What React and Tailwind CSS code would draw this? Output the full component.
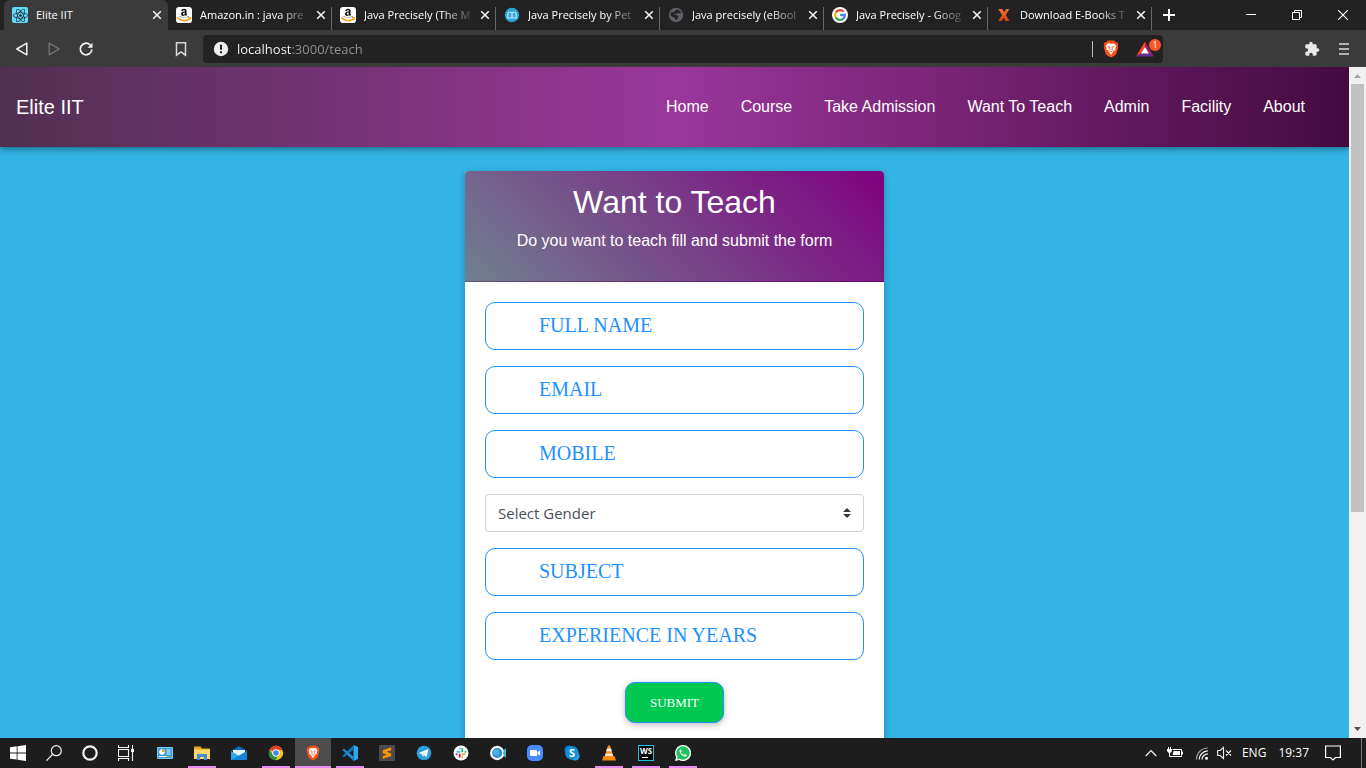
import React from "react";
import { FaAmazon, FaReact } from "react-icons/fa";

function AmazonIcon() {
  return (
    <svg viewBox="0 0 16 16" className="size-4 shrink-0" aria-hidden="true">
      <rect width="16" height="16" rx="3" fill="#fff" />
      <svg x="2.5" y="0.5" width="11" height="11" viewBox="0 0 448 400" overflow="hidden">
        <FaAmazon size={448} color="#111" />
      </svg>
      <rect x="1" y="10.4" width="14" height="5" fill="#fff" />
      <path d="M2 11.2c3.4 3 8 3 11.2.9" fill="none" stroke="#f90" strokeWidth="1.6" strokeLinecap="round" />
      <path d="M11.8 10.8l2.6-.2-.5 2.7" fill="none" stroke="#f90" strokeWidth="1.1" />
    </svg>
  );
}

function ReactIcon() {
  return (
    <span className="flex size-4 shrink-0 items-center justify-center rounded-xs bg-[#61dafb] text-[#20232a]">
      <FaReact size={15} aria-hidden="true" />
    </span>
  );
}

function BookIcon() {
  return (
    <svg viewBox="0 0 16 16" className="size-4 shrink-0" aria-hidden="true">
      <circle cx="8" cy="8" r="7.2" fill="#2ba6db" />
      <path d="M3.800 11V6.400Q3.800 5.200 5 5.200h1.800Q8 5.200 8 6.400V11zM8 11V6.400Q8 5.200 9.200 5.200H11q1.200 0 1.200 1.200V11z" fill="#3aa9dc" stroke="#c9ecfb" strokeWidth="1.1" />
    </svg>
  );
}

function GlobeIcon() {
  return (
    <svg viewBox="0 0 16 16" className="size-4 shrink-0" aria-hidden="true">
      <circle cx="8" cy="8" r="7.2" fill="#5f6368" />
      <path d="M8.500 2.600c2.200.2 4 1.500 4.800 3.300-1.300.6-2 .1-3 .3-1 .3-1.900.9-2.900.3-.8-.3-1.300 0-1.200.6.300.8 1.300.4 2.300.8 1.500.5 2.100 1.700 1.400 3-.4.800-1.200.9-1.400 1.900-.2.700-.9.600-1.200 0-.4-.9-.2-1.700-1-2.300C5 9.600 3.500 9.400 2.300 8.200c0-1.200.5-2.400 1.200-3.300 1 .5 1.900.5 2.600-.1.900-.6 1.400-1.500 2.400-2.200z" fill="#222" />
    </svg>
  );
}

function GoogleIcon() {
  return (
    <svg viewBox="0 0 16 16" className="size-4 shrink-0" aria-hidden="true">
      <circle cx="8" cy="8" r="8" fill="#fff" />
      <g fill="none" strokeWidth="2.300">
        <path d="M11.600 4.600A4.900 4.900 0 0 0 3.800 5.600" stroke="#ea4335" />
        <path d="M3.800 5.600a4.900 4.900 0 0 0 0 4.800" stroke="#fbbc05" />
        <path d="M3.800 10.400a4.900 4.900 0 0 0 7.200 1.500" stroke="#34a853" />
        <path d="M11 11.900A4.900 4.900 0 0 0 12.900 8H8.200" stroke="#4285f4" />
      </g>
    </svg>
  );
}

function XIcon() {
  return (
    <svg viewBox="0 0 16 16" className="size-4 shrink-0" aria-hidden="true">
      <defs>
        <linearGradient id="xg" x2="0" y2="1">
          <stop stopColor="#f0743c" />
          <stop offset="1" stopColor="#d63f0c" />
        </linearGradient>
      </defs>
      <path d="M2.300 2h4l1.900 3.300L10.300 2h3l-3.500 6 3.700 6H9.600L7.800 10.700 5.600 14H2.200l3.900-6z" fill="url(#xg)" />
    </svg>
  );
}

function BraveIcon({ className }) {
  return (
    <svg viewBox="0 0 16 18" className={className} aria-hidden="true">
      <path d="M4.600.6h6.800l1.500 1.700 1.200-.1 1.200 1.900-.5 1.400.5 1.600-1.900 6.600-1.500 1.700L8 17.500l-3.900-2.100-1.500-1.700L.7 7.100l.5-1.600L.7 4.100l1.200-1.900 1.200.1z" fill="#fb4f14" />
      <path d="M5 3.200l3 .5 3-.5 2.200 2.600-.9 2.400.4 1.300-2.400 2.100L8 14.900l-2.300-3.300-2.400-2.100.4-1.300-.9-2.400z" fill="#fff" />
      <path d="M4.500 6.500l2.500.5-.3 1.100 .4 1.700-1.500.7M11.500 6.500L9 7l.3 1.100-.4 1.700 1.500.7M6.700 12L8 11.200l1.300.8" fill="none" stroke="#fb4f14" strokeWidth=".8" />
    </svg>
  );
}

function CloseGlyph() {
  return (
    <svg viewBox="0 0 10 10" className="size-2.5" aria-hidden="true">
      <path d="M1.200 1.200l7.600 7.600M8.800 1.200L1.200 8.800" stroke="#f1f1f1" strokeWidth="1.600" />
    </svg>
  );
}

const tabs = [
  { title: "Elite IIT", icon: <ReactIcon />, active: true },
  { title: "Amazon.in : java pre", icon: <AmazonIcon /> },
  { title: "Java Precisely (The M", icon: <AmazonIcon /> },
  { title: "Java Precisely by Pet", icon: <BookIcon /> },
  { title: "Java precisely (eBool", icon: <GlobeIcon /> },
  { title: "Java Precisely - Goog", icon: <GoogleIcon /> },
  { title: "Download E-Books T", icon: <XIcon /> },
];

function TabStrip() {
  return (
    <div className="flex h-[30px] bg-[#222222] pl-1">
      {tabs.map((tab) => (
        <div
          key={tab.title}
          className={
            "flex h-full w-41 min-w-0 items-center pl-2 " +
            (tab.active ? "rounded-t-md bg-[#3b3b3b]" : "")
          }
        >
          {tab.icon}
          <a
            href="#tab"
            className={
              "ml-2 min-w-0 flex-1 overflow-hidden text-[11px] whitespace-nowrap text-white " +
              (tab.active ? "" : "[mask-image:linear-gradient(to_right,#000_78px,transparent_112px)]")
            }
          >
            {tab.title}
          </a>
          <button type="button" aria-label="Close tab" className="flex size-4 shrink-0 items-center justify-center">
            <CloseGlyph />
          </button>
          <span className={"ml-[2px] h-[23px] w-px shrink-0 self-end " + (tab.active ? "" : "bg-[#686868]")} />
        </div>
      ))}
      <button type="button" aria-label="New tab" className="flex w-8.5 items-center justify-center">
        <svg viewBox="0 0 12 12" className="size-3" aria-hidden="true">
          <path d="M6 0v12M0 6h12" stroke="#fff" strokeWidth="2" />
        </svg>
      </button>
      <div className="ml-auto flex">
        <button type="button" aria-label="Minimize" className="flex w-[46px] items-center justify-center">
          <svg viewBox="0 0 10 10" className="size-2.5"><path d="M0 4.500h10" stroke="#fff" /></svg>
        </button>
        <button type="button" aria-label="Restore" className="flex w-[46px] items-center justify-center">
          <svg viewBox="0 0 10 10" className="size-2.5"><path d="M.5 2.500h7v7h-7zM2.500 2.500v-2h7v7h-2" fill="none" stroke="#fff" /></svg>
        </button>
        <button type="button" aria-label="Close" className="flex w-[46px] items-center justify-center">
          <svg viewBox="0 0 10 10" className="size-2.5"><path d="M0 0l10 10M10 0L0 10" stroke="#fff" strokeWidth="1.100" /></svg>
        </button>
      </div>
    </div>
  );
}

function Toolbar() {
  const btn = "flex h-8 w-8 shrink-0 items-center justify-center";
  return (
    <div className="flex h-[37px] items-center bg-[#3b3b3b] px-1.5">
      <button type="button" aria-label="Back" className={btn}>
        <svg viewBox="0 0 14 16" className="h-4 w-3.5"><path d="M11.800 2.200v11.600L1.800 8z" fill="none" stroke="#f0f0f0" strokeWidth="1.500" strokeLinejoin="round" /></svg>
      </button>
      <button type="button" aria-label="Forward" className={btn}>
        <svg viewBox="0 0 14 16" className="h-4 w-3.5"><path d="M2.200 2.200v11.600L12.200 8z" fill="none" stroke="#737373" strokeWidth="1.400" strokeLinejoin="round" /></svg>
      </button>
      <button type="button" aria-label="Reload" className={btn}>
        <svg viewBox="0 0 16 16" className="size-4">
          <path d="M12.300 4A5.800 5.800 0 1 0 13.900 8.500" fill="none" stroke="#f0f0f0" strokeWidth="1.800" />
          <path d="M9.500 6.800h5V1.700z" fill="#f0f0f0" />
        </svg>
      </button>
      <button type="button" aria-label="Bookmark" className={btn + " ml-[63px]"}>
        <svg viewBox="0 0 12 16" className="h-4 w-3"><path d="M1.500 1.700h9v12.500L6 11l-4.500 3.200z" fill="none" stroke="#d8d8d8" strokeWidth="1.500" /></svg>
      </button>
      <div className="mr-[133px] ml-1.5 flex h-7 min-w-0 flex-1 items-center rounded bg-[#222222] pl-2.5">
        <svg viewBox="0 0 16 16" className="size-4 shrink-0" aria-hidden="true">
          <circle cx="8" cy="8" r="7.200" fill="#efefef" />
          <path d="M8 3.700v5M8 10.200v2" stroke="#222" strokeWidth="2" />
        </svg>
        <input
          type="text"
          aria-label="Address"
          defaultValue="localhost:3000/teach"
          className="ml-2 h-5 min-w-0 flex-1 bg-linear-[90deg,#ffffff_54px,#929292_54px] bg-clip-text text-[13px] text-transparent outline-none"
        />
        <span className="h-4 w-px bg-[#bcbcbc]" />
        <button type="button" aria-label="Shields" className="ml-2.5 flex h-7 w-4 items-center justify-center">
          <BraveIcon className="h-[18px] w-4" />
        </button>
        <button type="button" aria-label="Rewards" className="relative mr-2 ml-4 flex h-7 w-5 items-center justify-center">
          <svg viewBox="0 0 18 16" className="h-4 w-[18px]">
            <path d="M9 .5L0 15.500l5-3L9 6z" fill="#ff4724" />
            <path d="M9 .5l9 15-5-3L9 6z" fill="#9e1f63" />
            <path d="M0 15.500h18l-5-3.500H5z" fill="#662d91" />
            <path d="M9 6l4 6.500H5z" fill="#fff" />
          </svg>
          <span className="absolute top-1 left-3.5 flex size-3 items-center justify-center rounded-full bg-[#fb542b] text-[9px] leading-3 text-white">1</span>
        </button>
      </div>
      <button type="button" aria-label="Extensions" className={btn}>
        <svg viewBox="0 0 24 24" className="size-4"><path d="M20.500 11H19V7c0-1.100-.9-2-2-2h-4V3.500a2.500 2.500 0 0 0-5 0V5H4c-1.100 0-2 .9-2 2v3.800h1.500a2.700 2.700 0 0 1 0 5.400H2V20c0 1.100.9 2 2 2h3.800v-1.500a2.700 2.700 0 0 1 5.400 0V22H17c1.100 0 2-.9 2-2v-4h1.500a2.500 2.500 0 0 0 0-5z" fill="#e8e8e8" /></svg>
      </button>
      <button type="button" aria-label="Menu" className={btn}>
        <svg viewBox="0 0 10 12" className="h-3 w-2.5"><path d="M0 1h10M0 6h10M0 11h10" stroke="#dcdcdc" strokeWidth="1.600" /></svg>
      </button>
    </div>
  );
}

const links = ["Home", "Course", "Take Admission", "Want To Teach", "Admin", "Facility", "About"];

function SiteNav() {
  return (
    <nav className="relative flex h-20 shrink-0 items-center justify-between bg-linear-[90deg,#503050,#9b369b_50%,#440a40] pr-7 pl-4 text-white shadow-[0_2px_5px_0_rgba(0,0,0,0.3),0_2px_10px_0_rgba(0,0,0,0.15)]">
      <a href="#home" className="text-xl">Elite IIT</a>
      <ul className="flex">
        {links.map((l) => (
          <li key={l}>
            <a href="#page" className="px-4 text-base">{l}</a>
          </li>
        ))}
      </ul>
    </nav>
  );
}

function Field({ label, name }) {
  return (
    <input
      type="text"
      name={name}
      aria-label={label}
      placeholder={label}
      className="mb-4 block h-12 w-full rounded-[10px] border border-[#1e90ff] bg-white pr-3 pb-0.5 pl-[53px] font-['Liberation_Serif',serif] text-xl text-[#1e90ff] placeholder:text-[#1e90ff] placeholder:opacity-100"
    />
  );
}

function TeachForm() {
  return (
    <form className="mx-auto mt-6 w-full max-w-[419px] rounded bg-white shadow-[0_2px_5px_0_rgba(0,0,0,0.16),0_2px_10px_0_rgba(0,0,0,0.12)]">
      <header className="rounded-t border-b border-black/15 bg-linear-[45deg,#708090,#800080] px-5 py-3 text-center text-white">
        <h2 className="mb-2 text-[32px] leading-[38px]">Want to Teach</h2>
        <p className="mb-4 text-base">Do you want to teach fill and submit the form</p>
      </header>
      <div className="p-5">
        <Field label="FULL NAME" name="name" />
        <Field label="EMAIL" name="email" />
        <Field label="MOBILE" name="mobile" />
        <div className="relative mb-4">
          <select
            aria-label="Select Gender"
            defaultValue=""
            className="block h-[38px] w-full appearance-none rounded border border-[#ced4da] bg-white px-3 font-['Open_Sans',sans-serif] text-[15px] text-[#495057]"
          >
            <option value="">Select Gender</option>
            <option>Male</option>
            <option>Female</option>
          </select>
          <svg viewBox="0 0 4 5" className="pointer-events-none absolute top-3.5 right-[13px] h-2.5 w-2" aria-hidden="true">
            <path d="M2 0L0 2h4zm0 5L0 3h4z" fill="#343a40" />
          </svg>
        </div>
        <Field label="SUBJECT" name="subject" />
        <Field label="EXPERIENCE IN YEARS" name="experience" />
        <div className="pt-1.5 text-center">
          <button
            type="submit"
            className="h-[41px] rounded-[10px] border border-[#1e90ff] bg-[#00c851] px-6 font-['Liberation_Serif',serif] text-[13px] text-white shadow-[0_2px_5px_0_rgba(0,0,0,0.16),0_2px_10px_0_rgba(0,0,0,0.12)]"
          >
            SUBMIT
          </button>
        </div>
      </div>
    </form>
  );
}

function ScrollBar() {
  return (
    <div className="flex w-[17px] shrink-0 flex-col items-center bg-[#f1f1f1]" aria-hidden="true">
      <svg viewBox="0 0 17 17" className="size-[17px] shrink-0"><path d="M5 11h7L8.500 7z" fill="#a3a3a3" /></svg>
      <div className="min-h-0 w-[13px] flex-[428] bg-[#c1c1c1]" />
      <div className="min-h-0 flex-[209]" />
      <svg viewBox="0 0 17 17" className="size-[17px] shrink-0"><path d="M5 6h7l-3.500 4z" fill="#505050" /></svg>
    </div>
  );
}

const systemItems = [
  {
    name: "Start",
    icon: (
      <svg viewBox="0 0 16 16" className="size-4">
        <path d="M0 2.200l6.700-.9v6.200H0zM7.500 1.200L16 0v7.500H7.500zM0 8.400h6.700v6.200L0 13.700zM7.500 8.400H16V16l-8.500-1.200z" fill="#fff" />
      </svg>
    ),
  },
  {
    name: "Search",
    icon: (
      <svg viewBox="0 0 16 16" className="size-4">
        <circle cx="10.300" cy="5.700" r="5" fill="none" stroke="#f5f5f5" strokeWidth="1.200" />
        <path d="M6.600 9.400L.5 15.600" stroke="#f5f5f5" strokeWidth="1.300" />
      </svg>
    ),
  },
  {
    name: "Cortana",
    icon: (
      <svg viewBox="0 0 16 16" className="size-4">
        <circle cx="8" cy="8" r="6.700" fill="none" stroke="#f2f2f2" strokeWidth="2.200" />
      </svg>
    ),
  },
  {
    name: "Task View",
    icon: (
      <svg viewBox="0 0 16 16" className="size-4">
        <path d="M.5 4.500h10v7H.500zM.5 0v2.500h10V0M.5 16v-2.500h10V16M14.500 0v16" fill="none" stroke="#f5f5f5" strokeWidth="1.100" />
        <path d="M13 4h3v3h-3z" fill="#f5f5f5" />
      </svg>
    ),
  },
];

const apps = [
  {
    name: "Control Panel",
    icon: (
      <svg viewBox="0 0 16 16" className="size-4">
        <rect y="2" width="16" height="12" rx="1" fill="#7cc9f2" />
        <rect x="1" y="3" width="14" height="10" fill="#3b9fdc" />
        <circle cx="5" cy="7" r="2.800" fill="#fff" />
        <path d="M5 7V4.200A2.800 2.800 0 0 1 7.800 7z" fill="#f5a623" />
        <path d="M9.500 5h4M9.500 7h4M9.500 9h4" stroke="#d9f1ff" />
        <path d="M2 11.500h7" stroke="#fff" />
        <path d="M9 11.500h3" stroke="#f5a623" />
      </svg>
    ),
  },
  {
    name: "File Explorer",
    open: true,
    icon: (
      <svg viewBox="0 0 16 16" className="size-4">
        <path d="M0 1.500h6.500l1.500 2h8V14H0z" fill="#e9a51e" />
        <path d="M0 4.500h16V14H0z" fill="#ffd667" />
        <path d="M3 15V9h10v6h-3v-3H6v3z" fill="#3f8fd6" />
      </svg>
    ),
  },
  {
    name: "Mail",
    icon: (
      <svg viewBox="0 0 16 16" className="size-4">
        <path d="M0 6l8-5 8 5z" fill="#0d6ab8" />
        <path d="M2 5h12v7H2z" fill="#eaf6fd" />
        <path d="M0 6l8 5 8-5v9H0z" fill="#2da8ee" />
        <path d="M0 15L16 6v9z" fill="#1684d6" />
      </svg>
    ),
  },
  {
    name: "Chrome",
    open: true,
    icon: (
      <svg viewBox="0 0 16 16" className="size-4">
        <circle cx="8" cy="8" r="7.200" fill="#fbc116" />
        <path d="M8 8L1.760 4.400A7.200 7.200 0 0 1 14.240 4.400L14.400 5H8z" fill="#e33b2e" />
        <path d="M1.760 4.400A7.200 7.200 0 0 0 7.500 15.200L10.500 10 4.500 9.500z" fill="#229342" />
        <circle cx="8" cy="8" r="3.700" fill="#fff" />
        <circle cx="8" cy="8" r="2.800" fill="#4285f4" />
      </svg>
    ),
  },
  { name: "Brave", open: true, active: true, icon: <BraveIcon className="h-4 w-3.5" /> },
  {
    name: "Visual Studio Code",
    open: true,
    icon: (
      <svg viewBox="0 0 16 16" className="size-4">
        <path d="M11.500 0L16 2v12l-4.500 2z" fill="#2fa8ef" />
        <path d="M11.500 0v4.500L2 12.300.4 11z" fill="#1073bd" />
        <path d="M11.500 16v-4.500L2 3.700.4 5z" fill="#1c8cd8" />
      </svg>
    ),
  },
  {
    name: "Sublime Text",
    icon: (
      <svg viewBox="0 0 16 16" className="size-4">
        <rect width="16" height="16" rx="1" fill="#4b4b4b" />
        <path d="M3.800 5.200L12.200 2.600v2.700L7.500 6.800l4.700 1.600v2.700l-8.400 2.700v-2.700l4.300-1.400-4.300-1.500z" fill="#ff9800" />
      </svg>
    ),
  },
  {
    name: "Telegram",
    icon: (
      <svg viewBox="0 0 16 16" className="size-4">
        <circle cx="8" cy="8" r="7.300" fill="#2b9fd9" />
        <path d="M2.800 8l9.600-4-1.700 8.300-2.700-2-1.400 1.400-.4-2.300z" fill="#fff" />
        <path d="M6.200 9.300l4.700-4-3.500 4.500-.8 1.800z" fill="#bfdcec" />
      </svg>
    ),
  },
  {
    name: "Slack",
    icon: (
      <svg viewBox="0 0 16 16" className="size-4">
        <circle cx="8" cy="8" r="7.500" fill="#fff" />
        <g strokeWidth="1.900" strokeLinecap="round">
          <path d="M4.300 6.700h2.300M6.800 3.500v.1" stroke="#36c5f0" />
          <path d="M9.300 4v2.500M12.300 6.700h.1" stroke="#2eb67d" />
          <path d="M9.500 9.300h2.300M9.300 12.300v.1" stroke="#ecb22e" />
          <path d="M6.700 9.500v2.300M3.600 9.300h.1" stroke="#e01e5a" />
        </g>
      </svg>
    ),
  },
  {
    name: "Video Call",
    icon: (
      <svg viewBox="0 0 16 16" className="size-4">
        <path d="M11 7.500l5-4.500v10l-5-4.500z" fill="#45aee5" />
        <circle cx="7.200" cy="8" r="7.200" fill="#f4f8fb" />
        <circle cx="7.200" cy="8" r="5" fill="#2c8fd0" />
        <circle cx="6.500" cy="7.300" r="3" fill="#4bb0e6" />
        <path d="M13 7l3-3v8l-3-3z" fill="#45aee5" />
      </svg>
    ),
  },
  {
    name: "Zoom",
    icon: (
      <svg viewBox="0 0 16 16" className="size-4">
        <rect width="16" height="16" rx="5" fill="#4a8cff" />
        <path d="M3 5h5.500q1.500 0 1.500 1.500V11H4.500Q3 11 3 9.500zM10.500 7.200L13 5.300v5.400l-2.500-1.900z" fill="#fff" />
      </svg>
    ),
  },
  {
    name: "Skype",
    icon: (
      <span className="relative flex size-4 items-center justify-center">
        <svg viewBox="0 0 16 16" className="size-4">
          <circle cx="5" cy="5" r="4.500" fill="#0078d4" />
          <circle cx="11" cy="11" r="4.500" fill="#28a8ea" />
          <circle cx="8" cy="8" r="6.800" fill="#1292d8" />
        </svg>
        <span className="absolute text-[11px] leading-4 font-bold text-white">S</span>
      </span>
    ),
  },
  {
    name: "VLC",
    open: true,
    icon: (
      <svg viewBox="0 0 16 16" className="size-4">
        <path d="M2.500 11h11l1.500 4.500H1z" fill="#f58a0b" />
        <path d="M7 .5h2L12.500 12q-4.500 2-9 0z" fill="#f7941d" />
        <path d="M6 3.500h4l.9 2.700H5.100zM4.500 8.700h7l.6 2H3.900z" fill="#eee" />
      </svg>
    ),
  },
  {
    name: "WebStorm",
    open: true,
    icon: (
      <span className="flex size-4 flex-col items-start border border-[#16c5e5] bg-black pl-px">
        <span className="text-[8px] leading-[9px] font-bold text-white">WS</span>
        <span className="mt-[2px] ml-[2px] h-px w-1.5 bg-white" />
      </span>
    ),
  },
  {
    name: "WhatsApp",
    open: true,
    icon: (
      <svg viewBox="0 0 16 16" className="size-4">
        <path d="M8 0a8 8 0 1 1-3.800 15L0 16l1.100-4A8 8 0 0 1 8 0z" fill="#fff" />
        <path d="M8 1.300a6.700 6.700 0 1 1-3.500 12.400l-2.600.6.700-2.500A6.700 6.700 0 0 1 8 1.300z" fill="#20c05c" />
        <path d="M5.600 4.200c-1 .5-1.400 1.800-.7 3.300.9 1.900 2.400 3.300 4.500 4 1.200.3 2.300-.4 2.400-1.600L9.900 9l-.9 1C7.600 9.400 6.700 8.500 6 7.200l.8-1z" fill="#fff" />
      </svg>
    ),
  },
];

function TaskBar() {
  return (
    <footer className="flex h-[30px] shrink-0 items-center bg-[#1d1d1d] text-white">
      <div className="mr-[3px] flex">
        {systemItems.map((s) => (
          <button key={s.name} type="button" aria-label={s.name} className="flex h-[30px] w-9 items-center justify-center">
            {s.icon}
          </button>
        ))}
      </div>
      <div className="flex gap-px">
        {apps.map((a) => (
          <button
            key={a.name}
            type="button"
            aria-label={a.name}
            className={"relative flex h-[30px] w-9 items-center justify-center " + (a.active ? "bg-[#4d4d4d]" : "")}
          >
            {a.icon}
            {a.open && (
              <span className={"absolute bottom-0 h-0.5 bg-[#e88cf0] " + (a.active ? "inset-x-0" : "inset-x-1")} />
            )}
          </button>
        ))}
      </div>
      <div className="ml-auto flex h-full items-center text-xs">
        <button type="button" aria-label="Show hidden icons" className="mr-2.5">
          <svg viewBox="0 0 12 8" className="h-2 w-3"><path d="M.7 7L6 1.500 11.300 7" fill="none" stroke="#f3f3f3" strokeWidth="1.200" /></svg>
        </button>
        <svg viewBox="0 0 16 12" className="mr-3 h-3 w-4" aria-label="Battery">
          <path d="M5.500 2.500h9v7h-9M15.500 4.500v3M1.500 0v2.500M3.500 0v2.500" fill="none" stroke="#fff" />
          <path d="M6.500 4h6.500v4H5.500zM0 2h5v2L3.500 6h-2L0 4z" fill="#fff" />
          <path d="M2.500 6v3.500H6" fill="none" stroke="#fff" />
        </svg>
        <svg viewBox="0 0 14 14" className="mr-2 h-3.5 w-3.5" aria-label="Network">
          <g fill="none" strokeWidth="1.200">
            <path d="M1.500 13.500A11.500 11.500 0 0 1 12.800 2" stroke="#a5a5a5" />
            <path d="M4.200 13.500A8.800 8.800 0 0 1 12.800 4.900" stroke="#f0f0f0" />
            <path d="M7 13.500A6 6 0 0 1 12.800 7.800" stroke="#f0f0f0" />
          </g>
          <circle cx="11.500" cy="12.300" r="1.500" fill="#fff" />
        </svg>
        <svg viewBox="0 0 15 14" className="mr-2.5 h-3.5 w-[15px]" aria-label="Muted">
          <path d="M.7 4.500h2.500L6.500 1.500v11L3.200 9.500H.7zM9 4.500l5 5M14 4.500l-5 5" fill="none" stroke="#f3f3f3" strokeWidth="1.100" />
        </svg>
        <span className="mr-3">ENG</span>
        <time className="mr-4">19:37</time>
        <button type="button" aria-label="Notifications" className="mr-5">
          <svg viewBox="0 0 16 16" className="size-4"><path d="M.6 1h14.800v11.500H10.500L8 15l-2.500-2.500H.6z" fill="none" stroke="#fff" strokeWidth="1.200" /></svg>
        </button>
        <span className="mr-1 h-full w-px bg-[#747474]" />
      </div>
    </footer>
  );
}

export default function App() {
  return (
    <div className="flex h-screen flex-col overflow-hidden font-['Open_Sans',sans-serif]">
      <TabStrip />
      <Toolbar />
      <div className="flex min-h-0 flex-1">
        <main className="flex min-w-0 flex-1 flex-col overflow-hidden bg-[#33b5e5] font-['Liberation_Sans',Arial,sans-serif]">
          <SiteNav />
          <TeachForm />
        </main>
        <ScrollBar />
      </div>
      <TaskBar />
    </div>
  );
}
